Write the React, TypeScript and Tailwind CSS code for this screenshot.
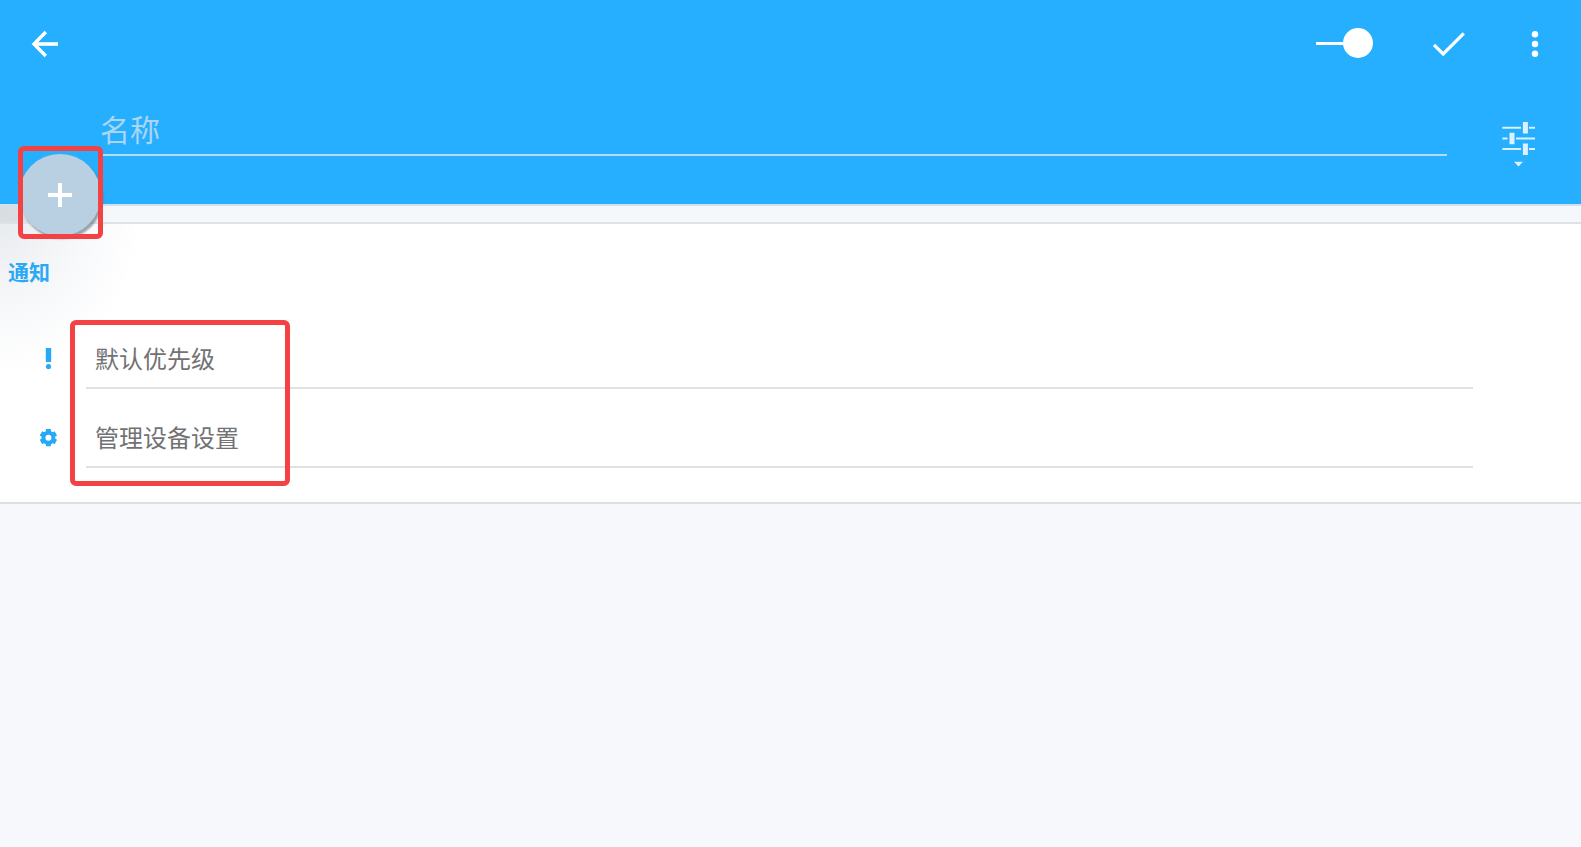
import { useState } from "react";
import type { ReactNode } from "react";

function SettingRow({ icon, label }: { icon: ReactNode; label: string }) {
  return (
    <li className="flex pl-9 pr-[108px]">
      <span className="flex w-6 shrink-0 items-center justify-center pb-[18px] pt-9" aria-hidden="true">
        {icon}
      </span>
      <button
        type="button"
        className="ml-[26px] flex-1 border-b-2 border-[#dfe1e2] pb-[13px] pl-[9px] pt-8 text-left text-2xl leading-8 text-[#727274]"
      >
        {label}
      </button>
    </li>
  );
}

export default function App() {
  const [enabled, setEnabled] = useState(true);
  const [name, setName] = useState("");

  return (
    <div className="relative min-h-screen overflow-hidden bg-[#f6f8fb] font-['Noto_Sans_CJK_SC',sans-serif]">
      <header className="relative bg-[#26aeff] pb-9 text-white">
        <div className="flex h-[88px] items-center pl-[25px] pr-[26px]">
          <button type="button" aria-label="返回" className="size-10">
            <svg viewBox="0 0 40 40" className="size-10" fill="none" stroke="currentColor">
              <path d="M33 20H9" strokeWidth="3.6" />
              <path d="M20.8 8 L9 20 L20.8 32" strokeWidth="3.4" />
            </svg>
          </button>
          <label className="ml-auto flex h-10 cursor-pointer items-center">
            <input
              type="checkbox"
              role="switch"
              aria-label="启用"
              className="peer sr-only"
              checked={enabled}
              onChange={(e) => setEnabled(e.target.checked)}
            />
            <span className="flex w-[57px] flex-row-reverse items-center pb-0.5 peer-checked:flex-row">
              <span className="h-[3px] flex-1 bg-white" />
              <span className="size-[30px] rounded-full bg-white" />
            </span>
          </label>
          <button type="button" aria-label="保存" className="ml-14 size-10">
            <svg viewBox="0 0 40 40" className="size-10" fill="none" stroke="currentColor" strokeWidth="3.2">
              <path d="M5 20.8 L14.2 30 L34.8 9.3" />
            </svg>
          </button>
          <button type="button" aria-label="更多选项" className="ml-[46px] size-10">
            <svg viewBox="0 0 40 40" className="size-10" fill="currentColor">
              <circle cx="20" cy="10.2" r="3.2" />
              <circle cx="20" cy="20" r="3.2" />
              <circle cx="20" cy="29.8" r="3.2" />
            </svg>
          </button>
        </div>
        <div className="flex items-start pl-[100px] pr-[45px]">
          <input
            type="text"
            aria-label="名称"
            placeholder="名称"
            value={name}
            onChange={(e) => setName(e.target.value)}
            className="h-[68px] min-w-0 flex-1 border-b-2 border-[#b5daf3] bg-transparent pb-1.5 pt-5 text-[30px] leading-10 text-white outline-none placeholder:text-[#a9d6f3]"
          />
          <button type="button" aria-label="更多设置" className="ml-[53px] mt-8 h-12 w-9">
            <svg viewBox="0 0 36 48" className="h-12 w-9" fill="none" stroke="#dcf0fd">
              <path d="M2.3 7.8H21M29 7.8H35M2.3 18.4H7.5M16 18.4H35M2.3 29H21M29 29H35" strokeWidth="2" />
              <path
                d="M25.4 2V13.4M12 12.8V24.2M25.4 23.5V34.9"
                strokeWidth="5"
              />
              <path d="M14 41.8H23L18.5 46.5Z" fill="#dcf0fd" stroke="none" />
            </svg>
          </button>
        </div>
        <button
          type="button"
          aria-label="添加图标"
          className="absolute -bottom-8 left-[19px] z-10 flex size-[82px] items-center justify-center rounded-full bg-[#b9d0e3] shadow-[2px_3px_2px_rgba(60,80,95,0.5)]"
        >
          <svg viewBox="0 0 24 24" className="size-6" stroke="white" strokeWidth="4">
            <path d="M12 0V24M0 12H24" />
          </svg>
        </button>
        <div className="pointer-events-none absolute -bottom-[35px] left-[18px] z-20 h-[93px] w-[85px] rounded-md border-[5px] border-[#f44144]" />
      </header>
      <div className="h-5 border-y-2 border-t-[#cfe2f0] border-b-[#dde2e4] bg-[linear-gradient(to_right,#d8dde1_0px,#dadfe3_20px,#f4f8fa_110px)]" />
      <main className="relative border-b-2 border-[#dde0e2] bg-[radial-gradient(ellipse_140px_150px_at_0px_0px,#e9ecef,#f8f9fb_60%,#ffffff)] pb-[34px] pt-[33px]">
        <h2 className="pl-2 text-[21px] font-bold leading-7 text-[#2ba9f5]">通知</h2>
        <ul className="pt-[25px]">
          <SettingRow
            label="默认优先级"
            icon={
              <svg viewBox="0 0 24 24" className="size-6" fill="#26a9f7">
                <path d="M9.8 1H15.2V15H9.8Z" />
                <circle cx="12.5" cy="19.6" r="2.6" />
              </svg>
            }
          />
          <SettingRow
            label="管理设备设置"
            icon={
              <svg viewBox="0 0 24 24" className="size-6" stroke="#26a9f7" fill="none">
                <circle cx="12.4" cy="11.7" r="5" strokeWidth="4" />
                <path
                  d="M12.4 3.1V6.7M12.4 16.7V20.3M4.95 7.4L8.1 9.2M16.7 14.2L19.85 16M4.95 16L8.1 14.2M16.7 9.2L19.85 7.4"
                  strokeWidth="5"
                />
              </svg>
            }
          />
        </ul>
        <div className="pointer-events-none absolute left-[70px] top-[96px] h-[166px] w-[220px] rounded-md border-[5px] border-[#f44144]" />
      </main>
    </div>
  );
}
